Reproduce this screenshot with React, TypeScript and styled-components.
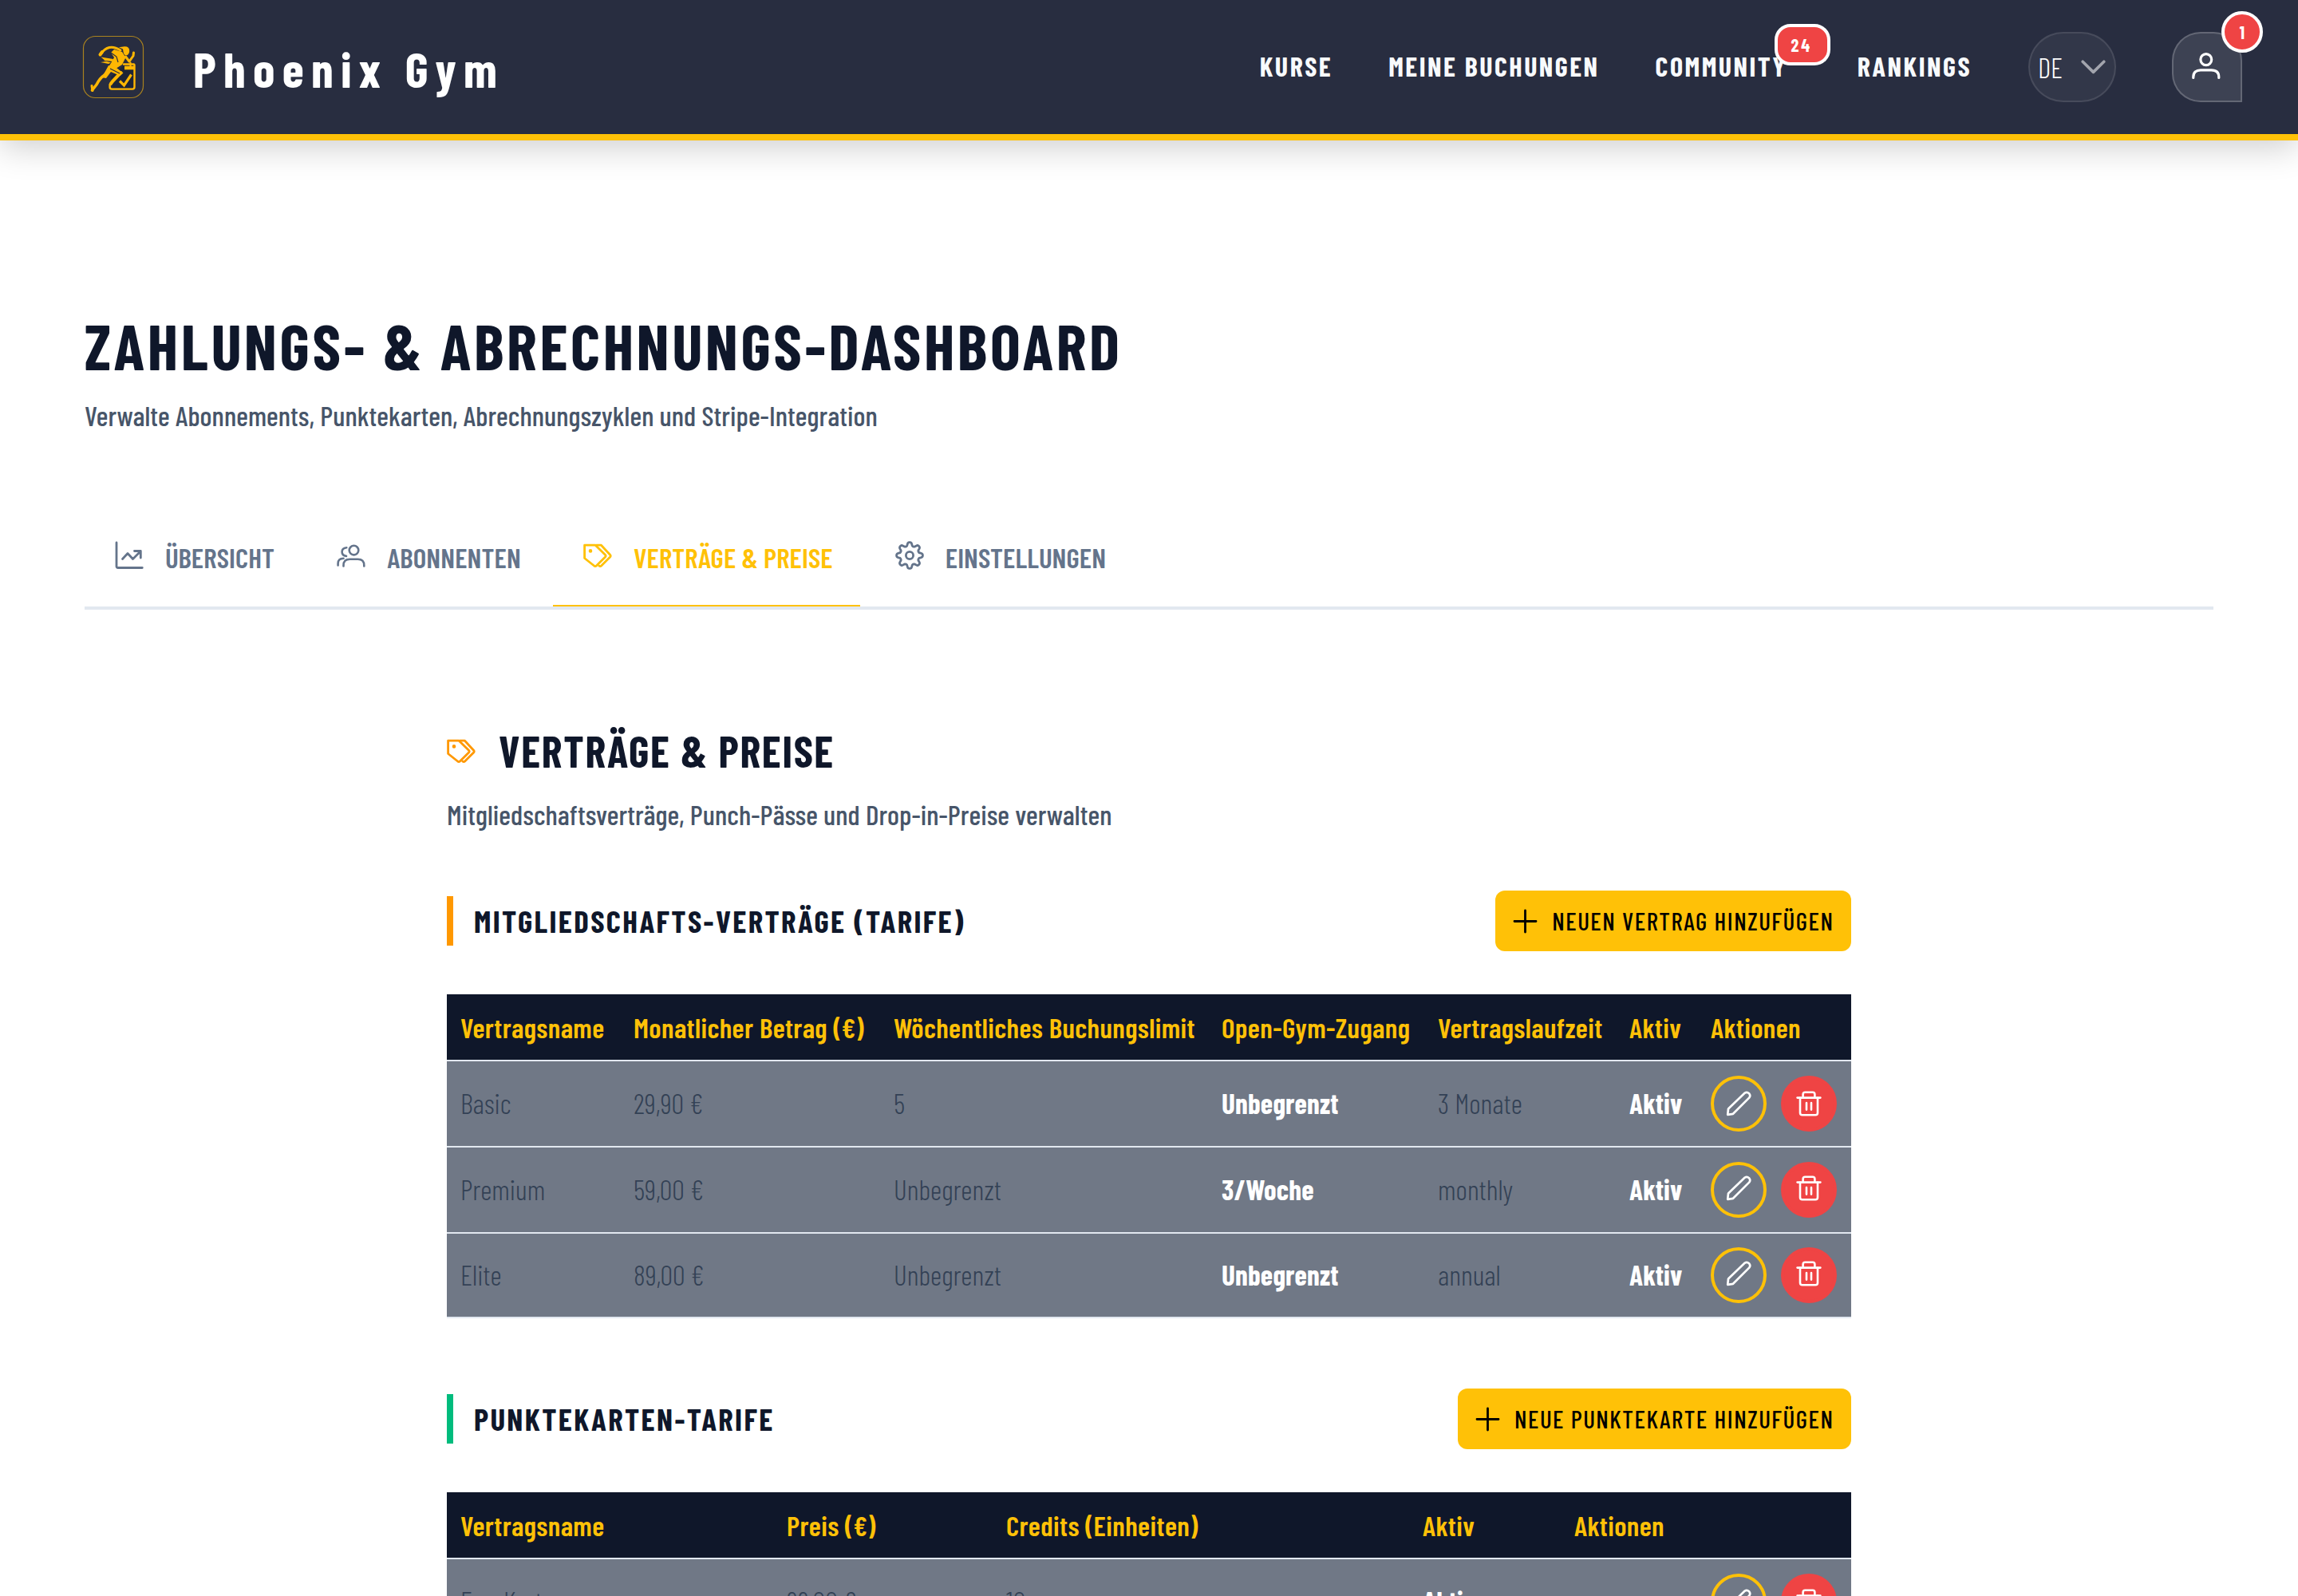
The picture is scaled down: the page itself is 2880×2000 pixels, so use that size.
import React from 'react';
import styled, { createGlobalStyle, css } from 'styled-components';

const gold = '#ffc107';
const ink = '#0f172a';
const line = '#e2e8f0';
const red = '#ef4444';

const GlobalStyle = createGlobalStyle`
  * { box-sizing: border-box; }
  html, body { margin: 0; padding: 0; background: #fff; }
  body {
    font-family: "Barlow Condensed", "Roboto Condensed", sans-serif;
    color: ${ink};
    overflow: hidden;
  }
  h1, h2, h3, p { margin: 0; }
  svg { display: block; flex: none; }
`;

const Page = styled.div`
  width: 2880px;
  height: 2000px;
  overflow: hidden;
  background: #fff;
`;

/* ---------- header ---------- */

const Header = styled.header`
  position: relative;
  display: flex;
  align-items: center;
  justify-content: space-between;
  height: 176px;
  padding: 0 70px 0 103px;
  background: #282d40;
  border-bottom: 8px solid ${gold};
  box-shadow: 0 8px 40px rgba(0, 0, 0, 0.2);
`;

const Brand = styled.div`
  display: flex;
  align-items: center;
`;

const BrandName = styled.span`
  margin: 2px 0 0 61px;
  font-size: 62px;
  font-weight: 700;
  line-height: 1.2;
  letter-spacing: 9.24px;
  color: #fff;
  white-space: nowrap;
`;

const Nav = styled.nav`
  display: flex;
  align-items: center;
  gap: 70px;
`;

const NavLink = styled.a<{ $badged?: boolean }>`
  position: relative;
  margin: -1px ${p => (p.$badged ? '18px' : '0')} 0 0;
  font-size: 34px;
  font-weight: 700;
  line-height: 1.2;
  letter-spacing: 2.52px;
  text-transform: uppercase;
  color: #f8fafc;
  white-space: nowrap;
`;

const Badge = styled.span<{ $round?: boolean }>`
  position: absolute;
  top: ${p => (p.$round ? '-28px' : '-33px')};
  right: ${p => (p.$round ? '-28px' : '-54px')};
  display: flex;
  align-items: center;
  justify-content: center;
  width: ${p => (p.$round ? '52px' : '70px')};
  height: 52px;
  padding-right: ${p => (p.$round ? '0' : '2px')};
  border: 4px solid #fff;
  border-radius: ${p => (p.$round ? '50%' : '20px')};
  background: ${red};
  font-size: 22.4px;
  font-weight: 700;
  line-height: 1;
  letter-spacing: ${p => (p.$round ? '0' : '3px')};
  color: #fff;
`;

const Language = styled.button`
  display: flex;
  align-items: center;
  justify-content: space-between;
  width: 110px;
  height: 88px;
  margin-left: 1px;
  padding: 0 11px 0 10px;
  border: 2px solid rgba(255, 255, 255, 0.1);
  border-radius: 44px;
  background: rgba(255, 255, 255, 0.05);
  font: 300 35.2px/1.2 "Barlow Condensed", "Roboto Condensed", sans-serif;
  color: #fff;
`;

const UserButton = styled.button`
  position: relative;
  display: flex;
  align-items: center;
  justify-content: center;
  width: 88px;
  height: 88px;
  padding: 0;
  border: 2px solid rgba(255, 255, 255, 0.2);
  border-radius: 36px 36px 0 36px;
  background: rgba(255, 255, 255, 0.1);
  font-family: inherit;
  color: #fff;
`;

/* ---------- page head and tabs ---------- */

const Main = styled.main`
  padding: 208px 106px 0;
`;

const Title = styled.h1`
  font-size: 80px;
  font-weight: 700;
  line-height: 96px;
  letter-spacing: 3.6px;
  text-transform: uppercase;
`;

const Lead = styled.p<{ $top: number }>`
  margin-top: ${p => p.$top}px;
  font-size: 35.2px;
  font-weight: 500;
  line-height: 54px;
  letter-spacing: 0.07px;
  color: #475569;
  white-space: nowrap;
`;

const Tabs = styled.div`
  display: flex;
  gap: 6.1px;
  margin-top: 91px;
  border-bottom: 4px solid ${line};
`;

const Tab = styled.div<{ $active?: boolean }>`
  display: flex;
  align-items: center;
  gap: 27px;
  height: 122px;
  padding: 0 34px 0 38px;
  border-bottom: 2px solid ${p => (p.$active ? gold : 'transparent')};
  font-size: 35.2px;
  font-weight: 600;
  line-height: 1.2;
  letter-spacing: 0.1px;
  text-transform: uppercase;
  color: ${p => (p.$active ? gold : '#64748b')};
  white-space: nowrap;
  svg { margin-top: -4px; }
`;

/* ---------- sections ---------- */

const Content = styled.div`
  width: 1760px;
  margin: 144px auto 0;
`;

const Heading = styled.h2`
  display: flex;
  align-items: center;
  gap: 29px;
  font-size: 54.4px;
  font-weight: 700;
  line-height: 66px;
  letter-spacing: 1.74px;
  text-transform: uppercase;
  svg { color: #ff9800; }
`;

const Section = styled.section<{ $top: number }>`
  margin-top: ${p => p.$top}px;
`;

const SectionHead = styled.div`
  display: flex;
  align-items: center;
  justify-content: space-between;
  height: 76px;
`;

const SectionTitle = styled.h3<{ $accent: string }>`
  padding-left: 26px;
  border-left: 8px solid ${p => p.$accent};
  font-size: 39px;
  font-weight: 700;
  line-height: 62px;
  letter-spacing: 2.36px;
  text-transform: uppercase;
`;

const AddButton = styled.button`
  display: flex;
  align-items: center;
  gap: 18px;
  height: 76px;
  padding: 0 21.5px 0 22px;
  border: 0;
  border-radius: 12px;
  background: ${gold};
  font: 500 31px/1.2 "Barlow Condensed", "Roboto Condensed", sans-serif;
  letter-spacing: 1.56px;
  text-transform: uppercase;
  color: #000;
  white-space: nowrap;
`;

/* ---------- tables ---------- */

const Table = styled.table`
  width: 1760px;
  margin-top: 54px;
  table-layout: fixed;
  border-collapse: separate;
  border-spacing: 0;
`;

const cell = css`
  padding: 0 0 0 17px;
  border-bottom: 2px solid ${line};
  text-align: left;
  vertical-align: middle;
  white-space: nowrap;
`;

const Th = styled.th`
  ${cell}
  height: 84px;
  background: ${ink};
  font-size: 35.2px;
  font-weight: 600;
  line-height: 1.2;
  letter-spacing: 0.44px;
  color: ${gold};
`;

const Td = styled.td<{ $strong?: boolean; $h: number }>`
  ${cell}
  height: ${p => p.$h}px;
  padding-bottom: 2px;
  background: #707886;
  font-size: 35.2px;
  font-weight: ${p => (p.$strong ? 700 : 300)};
  line-height: 1.2;
  letter-spacing: ${p => (p.$strong ? '0.2px' : '0')};
  color: ${p => (p.$strong ? '#fff' : '#334155')};
`;

const ActionTd = styled(Td)`
  padding: 0 18px 0 0;
`;

const Actions = styled.div`
  display: flex;
  justify-content: flex-end;
  gap: 18px;
`;

const RoundButton = styled.button<{ $danger?: boolean; $lift: number }>`
  display: flex;
  align-items: center;
  justify-content: center;
  width: 70px;
  height: 70px;
  padding: 0 0 ${p => p.$lift * 2}px;
  border: 4px solid ${p => (p.$danger ? red : gold)};
  border-radius: 50%;
  background: ${p => (p.$danger ? red : 'transparent')};
  color: #fff;
`;

/* ---------- icons ---------- */

const Icon = ({ children, size = 36, w = 3 }: { children: React.ReactNode; size?: number; w?: number }) => (
  <svg width={size} height={size} viewBox={`0 0 ${size} ${size}`} fill="none" stroke="currentColor"
    strokeWidth={w} strokeLinecap="round" strokeLinejoin="round">{children}</svg>
);

const ChartIcon = () => (
  <Icon w={2.8}>
    <path d="M2 2V31.5Q2 33.5 4 33.5H34.3" />
    <path d="M9.5 22.5L16 15.5L22.5 22.5L32 13M24.5 12.5H32.3V21" />
  </Icon>
);

const UsersIcon = () => (
  <Icon w={2.6}>
    <circle cx="21.5" cy="11.6" r="5.8" />
    <path d="M8.5 31.5V30.5C8.5 25 12 22.8 16.5 22.8H26.5C31 22.8 34.3 25 34.3 30.5V31.5" />
    <path d="M12.3 8.2C8.8 8.6 6.6 10.8 6.6 13.6C6.6 16.6 8.9 18.6 12 18.9" />
    <path d="M1.6 30.5V28C1.6 24.5 4 22 8.5 21.8" />
  </Icon>
);

const TagsIcon = () => (
  <Icon w={2.8}>
    <path d="M1.6 5.2H15.2L27.5 17.2Q28.8 18.6 27.5 20L16.4 31Q15 32.4 13.6 31L1.6 21.5Z" />
    <path d="M16.5 5.2H22.5L33.6 17.2Q34.8 18.6 33.6 20L22.6 31Q21.2 32.4 19.8 31" />
    <circle cx="9" cy="12.4" r="1.4" fill="currentColor" strokeWidth="1.8" />
  </Icon>
);

/* eight rounded teeth, traced as a flattened cosine around the hub */
const gearPath = (() => {
  const pts: string[] = [];
  for (let i = 0; i < 160; i++) {
    const a = (i / 160) * Math.PI * 2;
    const k = Math.cos(8 * a);
    const r = 14.2 + (2.2 * Math.tanh(1.6 * k)) / Math.tanh(1.6);
    pts.push(`${(18 + r * Math.sin(a)).toFixed(2)} ${(18 - r * Math.cos(a)).toFixed(2)}`);
  }
  return `M${pts.join('L')}Z`;
})();

const GearIcon = () => (
  <Icon w={2.8}>
    <path d={gearPath} />
    <circle cx="18" cy="18" r="4.6" />
  </Icon>
);

const PlusIcon = () => (
  <Icon size={31} w={2.8}><path d="M15.5 2V29M2 15.5H29" /></Icon>
);

const PencilIcon = () => (
  <Icon size={34} w={2.7}>
    <path d="M3.2 30.8L4 23.4L24.8 3.6Q27.4 1.8 30 4.2Q32.4 7 30.2 9.6L10 29.8Z" />
  </Icon>
);

const TrashIcon = () => (
  <Icon size={34} w={2.6}>
    <path d="M2.6 9.6H31.4" />
    <path d="M9.6 9.2V5.4Q9.6 2.8 12.2 2.8H21.8Q24.4 2.8 24.4 5.4V9.2" />
    <path d="M6 9.8V28.4Q6 31.2 8.8 31.2H25.2Q28 31.2 28 28.4V9.8" />
    <path d="M14 16V24.6M20 16V24.6" />
  </Icon>
);

const UserIcon = () => (
  <Icon size={40} w={3.2}>
    <ellipse cx="18.8" cy="10.6" rx="6.9" ry="7" />
    <path d="M2.8 33.4V32.6C2.8 26.6 6.2 23.8 12 23.8H25.4C31.2 23.8 34.8 26.6 34.8 32.6V33.4" />
  </Icon>
);

const ChevronIcon = () => (
  <svg width="31" height="20" viewBox="0 0 31 20" fill="none" stroke="rgba(255,255,255,.55)"
    strokeWidth="3.6" strokeLinecap="round" strokeLinejoin="round"><path d="M2.2 3.2L15.5 16.4L28.8 3.2" /></svg>
);

const Logo = () => (
  <svg width="78" height="80" viewBox="0 0 78 80">
    <rect x="1.5" y="1.5" width="75" height="77" rx="15" fill="none" stroke="#a9821f" strokeWidth="1.2" />
    <path d="M36 52L52 38H66V66H38Z" fill="#1d2436" />
    <g fill="none" stroke="#ffb703" strokeLinecap="round" strokeLinejoin="round">
      <path d="M52 36.5H64.5Q65.5 36.5 65.5 38V65Q65.5 67.6 63 67.6H37Q34.6 67.6 34.6 65V62" strokeWidth="2.4" />
      <path d="M53 41H65" strokeWidth="4.6" strokeLinecap="butt" />
      <path d="M47 57.5L52.5 63L61.5 49.5" strokeWidth="3.2" strokeLinecap="butt" strokeLinejoin="miter" />
      <path d="M60.5 34.5V40" strokeWidth="2" />
      <path d="M48 19Q40 14 34 15.5Q28 17 24.5 22.5" strokeWidth="3" />
      <path d="M25 21L22.5 24.5" strokeWidth="4" />
      <path d="M54.5 27L59 33L64 26L64.5 22" strokeWidth="3" />
      <path d="M48.5 47L38 58L35.8 61" strokeWidth="4" />
      <path d="M28 50Q22 54 18 62L12.5 69" strokeWidth="3.6" />
      <path d="M12 63.5L13 69.5" strokeWidth="3" />
    </g>
    <g fill="#ffb703">
      <path d="M46 15.2L53 14.2Q59.4 14 59.2 20Q58.8 25 55 25.4Q52 25 51.6 21L51 17.5Z" />
      <path d="M40 18L50 21L54.5 28L50 37L42 42L33 40Q38 32 40 28L36 22Z" />
      <path d="M23.5 27.5L39 30L38 33L26 31.5L36 34.5L33 36L23 34L30 33Z" />
      <path d="M33 38L43 41L51.5 47.5L47.5 51L36 46L30 54L24 53Q29 46 33 38Z" />
    </g>
    <path d="M36 22L43 27L45 34M35 42L47 48" fill="none" stroke="#282d40" strokeWidth="1.2" />
  </svg>
);

/* ---------- data ---------- */

const plans = [
  { name: 'Basic', price: '29,90 €', limit: '5', open: 'Unbegrenzt', term: '3 Monate', h: 108 },
  { name: 'Premium', price: '59,00 €', limit: 'Unbegrenzt', open: '3/Woche', term: 'monthly', h: 108 },
  { name: 'Elite', price: '89,00 €', limit: 'Unbegrenzt', open: 'Unbegrenzt', term: 'annual', h: 106 },
];

const RowActions = ({ lift = 0 }: { lift?: number }) => (
  <Actions>
    <RoundButton $lift={lift} aria-label="Bearbeiten"><PencilIcon /></RoundButton>
    <RoundButton $lift={lift} $danger aria-label="Löschen"><TrashIcon /></RoundButton>
  </Actions>
);

const Cols = ({ widths }: { widths: number[] }) => (
  <colgroup>{widths.map((w, i) => <col key={i} width={w} />)}</colgroup>
);

const App = () => (
  <Page>
    <GlobalStyle />
    <Header>
      <Brand>
        <Logo />
        <BrandName>Phoenix Gym</BrandName>
      </Brand>
      <Nav>
        <NavLink>Kurse</NavLink>
        <NavLink>Meine Buchungen</NavLink>
        <NavLink $badged>Community<Badge>24</Badge></NavLink>
        <NavLink>Rankings</NavLink>
        <Language>DE<ChevronIcon /></Language>
        <UserButton aria-label="Profil"><UserIcon /><Badge $round>1</Badge></UserButton>
      </Nav>
    </Header>
    <Main>
      <Title>Zahlungs- &amp; Abrechnungs-Dashboard</Title>
      <Lead $top={13}>Verwalte Abonnements, Punktekarten, Abrechnungszyklen und Stripe-Integration</Lead>
      <Tabs>
        <Tab><ChartIcon />Übersicht</Tab>
        <Tab><UsersIcon />Abonnenten</Tab>
        <Tab $active><TagsIcon />Verträge &amp; Preise</Tab>
        <Tab><GearIcon />Einstellungen</Tab>
      </Tabs>
      <Content>
        <Heading><TagsIcon />Verträge &amp; Preise</Heading>
        <Lead $top={19}>Mitgliedschaftsverträge, Punch-Pässe und Drop-in-Preise verwalten</Lead>
        <Section $top={69}>
          <SectionHead>
            <SectionTitle $accent="#ff9800">Mitgliedschafts-Verträge (Tarife)</SectionTitle>
            <AddButton><PlusIcon />Neuen Vertrag hinzufügen</AddButton>
          </SectionHead>
          <Table>
            <Cols widths={[217, 326, 411, 271, 240, 102, 193]} />
            <thead>
              <tr>
                <Th>Vertragsname</Th><Th>Monatlicher Betrag (€)</Th><Th>Wöchentliches Buchungslimit</Th>
                <Th>Open-Gym-Zugang</Th><Th>Vertragslaufzeit</Th><Th>Aktiv</Th><Th>Aktionen</Th>
              </tr>
            </thead>
            <tbody>
              {plans.map((p, i) => (
                <tr key={p.name}>
                  <Td $h={p.h}>{p.name}</Td>
                  <Td $h={p.h}>{p.price}</Td>
                  <Td $h={p.h}>{p.limit}</Td>
                  <Td $h={p.h} $strong>{p.open}</Td>
                  <Td $h={p.h}>{p.term}</Td>
                  <Td $h={p.h} $strong>Aktiv</Td>
                  <ActionTd $h={p.h}><RowActions lift={i === 0 ? 0 : 2} /></ActionTd>
                </tr>
              ))}
            </tbody>
          </Table>
        </Section>
        <Section $top={88}>
          <SectionHead>
            <SectionTitle $accent="#00bc7d">Punktekarten-Tarife</SectionTitle>
            <AddButton><PlusIcon />Neue Punktekarte hinzufügen</AddButton>
          </SectionHead>
          <Table>
            <Cols widths={[409, 275, 522, 190, 364]} />
            <thead>
              <tr><Th>Vertragsname</Th><Th>Preis (€)</Th><Th>Credits (Einheiten)</Th><Th>Aktiv</Th><Th>Aktionen</Th></tr>
            </thead>
            <tbody>
              <tr>
                <Td $h={108}>Fun-Karte</Td>
                <Td $h={108}>99,00 €</Td>
                <Td $h={108}>10</Td>
                <Td $h={108} $strong>Aktiv</Td>
                <ActionTd $h={108}><RowActions /></ActionTd>
              </tr>
            </tbody>
          </Table>
        </Section>
      </Content>
    </Main>
  </Page>
);

export default App;
